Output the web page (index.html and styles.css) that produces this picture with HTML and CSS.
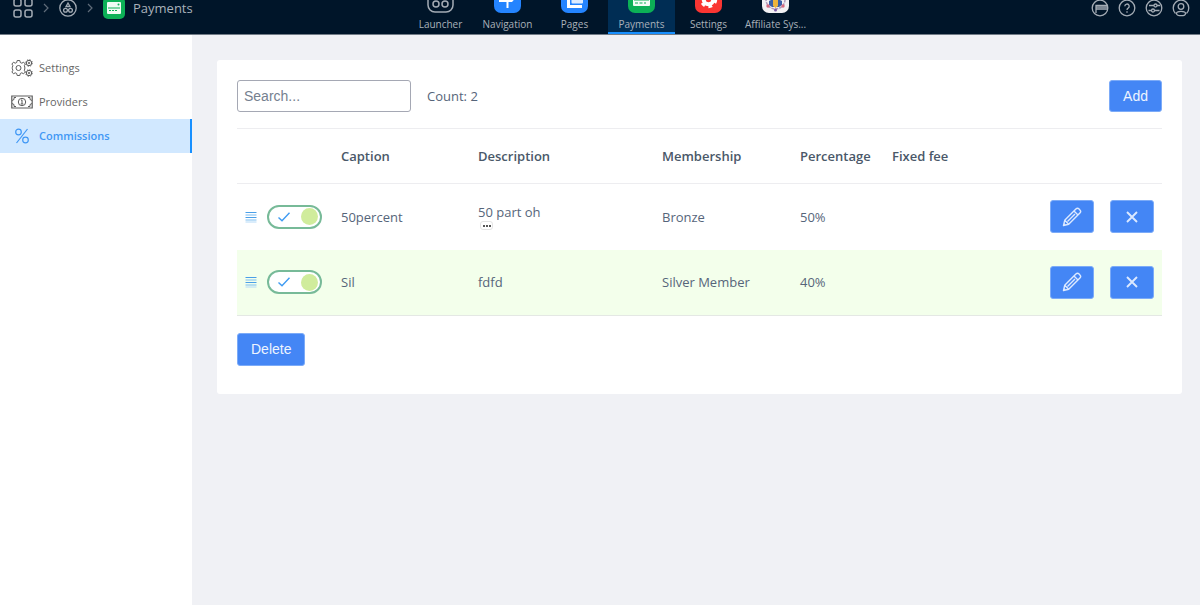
FILE: index.html
```html
<!DOCTYPE html>
<html lang="en">
<head>
<meta charset="utf-8">
<title>Payments - Commissions</title>
<link rel="stylesheet" href="styles.css">
</head>
<body>
<svg class="defs" aria-hidden="true">
  <symbol id="check" viewBox="0 0 14 12"><path d="M1.5 6.5 5 9.8 12.500 1.800" fill="none" stroke="#3f9bf2" stroke-width="1.4"/></symbol>
  <symbol id="lines" viewBox="0 0 12 12"><path d="M.5 1.500h11M.5 6.500h11" stroke="#4a9fe8"/><path d="M.5 4h11M.5 9h11" stroke="#7dbdf0"/><path d="M.5 11h11" stroke="#b5daf7"/></symbol>
  <symbol id="pencil" viewBox="0 0 20 20"><path d="m1.500 18.500 1.200-5.200L13.900 2.100a2.300 2.300 0 0 1 3.200 0l.8.800a2.300 2.300 0 0 1 0 3.200L6.700 17.300zM2.700 13.300l4 4M12 4l4 4M5.500 14.500l7.500-7.500M1.800 16.500l1.700 1.700" fill="none" stroke="#dce9ff" stroke-width="1.400" stroke-linejoin="round"/></symbol>
  <symbol id="cross" viewBox="0 0 12 12"><path d="m1 1 10 10M11 1 1 11" stroke="#dce9ff" stroke-width="1.900"/></symbol>
  <symbol id="chevron" viewBox="0 0 6 10"><path d="m1 1 4 4-4 4" fill="none" stroke="#5f6c7a" stroke-width="1.200"/></symbol>
</svg>

<header class="topbar">
  <nav class="crumbs" aria-label="Breadcrumb">
    <a href="#" aria-label="Home"><svg class="home-icon" viewBox="0 0 20 20" fill="none" stroke="#a4acb5" stroke-width="1.500"><rect x="1" y="1" width="7" height="7" rx="2"/><rect x="12" y="1" width="7" height="7" rx="2"/><rect x="1" y="12" width="7" height="7" rx="2"/><rect x="12" y="12" width="7" height="7" rx="2"/></svg></a>
    <svg class="chevron"><use href="#chevron"/></svg>
    <a href="#" aria-label="Modules"><svg class="ring-icon" viewBox="0 0 18 18" fill="none" stroke="#a4acb5" stroke-width="1.300"><circle cx="9" cy="9" r="8.200"/><path d="M9 4 7 7.500h4z"/><circle cx="6.500" cy="11.300" r="1.900"/><circle cx="11.500" cy="11.300" r="1.900"/></svg></a>
    <svg class="chevron"><use href="#chevron"/></svg>
    <a href="#" class="crumb-current"><svg class="crumb-app" viewBox="0 0 22 22"><rect width="22" height="22" rx="5" fill="#0cb056"/><rect x="4" y="5" width="14" height="12" rx="1" fill="#effbf3"/><path d="M5 11h12M6 13.500h2M9 13.500h2M12 13.500h2" stroke="#0cb056" stroke-width="1.200"/><circle cx="15.500" cy="7.500" r="1" fill="#0cb056"/></svg><span>Payments</span></a>
  </nav>
  <nav class="apps" aria-label="Apps">
    <a href="#" class="app"><svg viewBox="0 0 27 27" fill="none" stroke="#a4acb5" stroke-width="1.500"><rect x="1" y="1" width="25" height="25" rx="7"/><circle cx="9" cy="9" r="3"/><circle cx="18" cy="9" r="3"/><circle cx="9" cy="18" r="3"/><circle cx="18" cy="18" r="3"/></svg><span>Launcher</span></a>
    <a href="#" class="app"><svg viewBox="0 0 27 27"><rect width="27" height="27" rx="7" fill="#2484ff"/><path d="M7 7h11l4 4.500-4 4.500H5V7z" fill="#fff"/><path d="M13.500 15v7" stroke="#fff" stroke-width="2"/></svg><span>Navigation</span></a>
    <a href="#" class="app"><svg viewBox="0 0 27 27"><rect width="27" height="27" rx="7" fill="#2484ff"/><path d="M6 8h3v11h12v3H6z" fill="#fff"/><rect x="10.500" y="5" width="11.500" height="12.500" rx="1" fill="#dcebff"/></svg><span>Pages</span></a>
    <a href="#" class="app app-active" aria-current="page"><svg viewBox="0 0 27 27"><rect width="27" height="27" rx="7" fill="#0cb056"/><rect x="5" y="7" width="17" height="13" rx="1" fill="#f2fcf5"/><path d="M6 14h15M7 17h3M11.500 17h3M16 17h2" stroke="#0cb056"/></svg><span>Payments</span></a>
    <a href="#" class="app"><svg viewBox="0 0 27 27"><rect width="27" height="27" rx="7" fill="#fa3532"/><circle cx="13.500" cy="13.500" r="4.800" fill="none" stroke="#fff" stroke-width="4"/><circle cx="13.500" cy="13.500" r="7.200" fill="none" stroke="#fff" stroke-width="3" stroke-dasharray="3.770"/></svg><span>Settings</span></a>
    <a href="#" class="app"><svg viewBox="0 0 27 27"><rect width="27" height="27" rx="7" fill="#f2f1f4"/><circle cx="13.500" cy="13.500" r="9.500" fill="none" stroke="#b09abb" stroke-width="1.500" stroke-dasharray="3 1"/><path d="M7 19v-4l4-2h5l4 2v4l-3 2h-7z" fill="#385fa8"/><path d="M11 13h5v7l-2.500 2-2.500-2z" fill="#edb43c"/><circle cx="6" cy="20" r="1.700" fill="#d56980"/><circle cx="21" cy="20" r="1.700" fill="#d56980"/><circle cx="13.500" cy="24" r="1.500" fill="#7d5aa5"/></svg><span>Affiliate Sys...</span></a>
  </nav>
  <div class="tools">
    <button type="button" aria-label="Site"><svg viewBox="0 0 18 18"><circle cx="9" cy="9" r="7.800"/><path d="M5 14V6.500h12M5 10h12M5 8.200h12" /></svg></button>
    <button type="button" aria-label="Help"><svg viewBox="0 0 18 18"><circle cx="9" cy="9" r="7.800"/><path d="M6.800 7.200a2.200 2.200 0 1 1 3.300 1.900Q9 9.700 9 11M9 12.200v1.500"/></svg></button>
    <button type="button" aria-label="Preferences"><svg viewBox="0 0 18 18"><circle cx="9" cy="9" r="7.800"/><path d="M4 6.500h5M12 6.500h3M3.500 11.500h3M9.500 11.500h5"/><circle cx="10.500" cy="6.500" r="1.500"/><circle cx="8" cy="11.500" r="1.500"/></svg></button>
    <button type="button" aria-label="Account"><svg viewBox="0 0 18 18"><path d="M3.500 14.500a7.800 7.800 0 1 1 11 0"/><circle cx="9" cy="7.500" r="2.800"/><ellipse cx="9" cy="14.500" rx="4.500" ry="2.200"/></svg></button>
  </div>
</header>

<div class="layout">
  <nav class="sidebar" aria-label="Payments">
    <a href="#" class="side-link"><svg viewBox="0 0 22 18" fill="none" stroke="#5c5c5c"><circle cx="7.500" cy="9" r="2.500"/><path d="M6.200 1.500h2.600l.5 2 1.500.7 1.800-1 1.700 1.800-1 1.700.5 1.300v2l-.5 1.300 1 1.700-1.700 1.800-1.800-1-1.500.7-.5 2H6.200l-.5-2-1.500-.7-1.700 1L.9 13l1-1.700-.6-1.500v-1.600l.6-1.500-1-1.700 1.600-1.800 1.700 1 1.500-.7z"/><circle cx="18" cy="4" r="2.700"/><circle cx="18" cy="4" r=".8"/><circle cx="18" cy="14" r="2.700"/><circle cx="18" cy="14" r=".8"/><circle cx="18" cy="4" r="3.400" stroke-width=".8" stroke-dasharray="1.335"/><circle cx="18" cy="14" r="3.400" stroke-width=".8" stroke-dasharray="1.335"/></svg><span>Settings</span></a>
    <a href="#" class="side-link"><svg viewBox="0 0 22 18" fill="none" stroke="#5c5c5c"><path d="M.8 3h20.400v12H.8z" stroke-width="1.200"/><path d="M5 4.500H3v2L1 7.500M17 4.500h2v2l2 1M5 13.500H3v-2l-2-1M17 13.500h2v-2l2-1"/><circle cx="11" cy="9" r="3.700"/><path d="M10 7.500l1-.7V11M9.700 11h2.600"/></svg><span>Providers</span></a>
    <a href="#" class="side-link side-active" aria-current="page"><svg viewBox="0 0 22 18" fill="none" stroke="#3f97f5" stroke-width="1.200"><circle cx="7.500" cy="5" r="2.800"/><circle cx="14.500" cy="13" r="2.800"/><path d="M16.500 2 5.500 16"/></svg><span>Commissions</span></a>
  </nav>

  <main class="content">
    <section class="card">
      <div class="toolbar">
        <input class="search" type="text" placeholder="Search..." aria-label="Search">
        <span class="count">Count: 2</span>
        <button type="button" class="btn btn-add">Add</button>
      </div>
      <table class="grid">
        <colgroup><col class="c-handle"><col class="c-toggle"><col class="c-caption"><col class="c-desc"><col class="c-member"><col class="c-percent"><col><col class="c-action"><col class="c-action"></colgroup>
        <thead>
          <tr><th></th><th></th><th>Caption</th><th>Description</th><th>Membership</th><th>Percentage</th><th>Fixed fee</th><th></th><th></th></tr>
        </thead>
        <tbody>
          <tr>
            <td><svg class="handle"><use href="#lines"/></svg></td>
            <td><label class="switch"><input type="checkbox" checked aria-label="Enable 50percent"><svg><use href="#check"/></svg></label></td>
            <td>50percent</td>
            <td><div class="desc"><span>50 part oh</span><button type="button" class="more" aria-label="Show more"><i></i><i></i><i></i></button></div></td>
            <td>Bronze</td><td>50%</td><td></td>
            <td><button type="button" class="btn btn-icon" aria-label="Edit"><svg class="pencil"><use href="#pencil"/></svg></button></td>
            <td><button type="button" class="btn btn-icon" aria-label="Remove"><svg class="cross"><use href="#cross"/></svg></button></td>
          </tr>
          <tr class="row-alt">
            <td><svg class="handle"><use href="#lines"/></svg></td>
            <td><label class="switch"><input type="checkbox" checked aria-label="Enable Sil"><svg><use href="#check"/></svg></label></td>
            <td>Sil</td><td>fdfd</td><td>Silver Member</td><td>40%</td><td></td>
            <td><button type="button" class="btn btn-icon" aria-label="Edit"><svg class="pencil"><use href="#pencil"/></svg></button></td>
            <td><button type="button" class="btn btn-icon" aria-label="Remove"><svg class="cross"><use href="#cross"/></svg></button></td>
          </tr>
        </tbody>
      </table>
      <button type="button" class="btn">Delete</button>
    </section>
  </main>
</div>
</body>
</html>
```
FILE: styles.css
```css
* { box-sizing: border-box; }

body {
  margin: 0;
  min-height: 100vh;
  display: flex;
  flex-direction: column;
  background: #f0f1f5;
  color: #56657a;
  font-family: "Segoe UI", "Open Sans", "Noto Sans", sans-serif;
  font-size: 13px;
  line-height: 18px;
}

a { color: inherit; text-decoration: none; }
button { font: inherit; cursor: pointer; }
svg { display: block; flex: none; }
.defs { position: absolute; width: 0; height: 0; }

/* Top bar: taller items are anchored to its bottom edge and clipped above */
.topbar {
  display: grid;
  grid-template-columns: 1fr auto 1fr;
  grid-template-rows: 34px;
  align-items: end;
  height: 35px;
  overflow: hidden;
  background: #001529;
  border-bottom: 1px solid #727c87;
  color: #a9b1ba;
}

.crumbs {
  display: flex;
  align-items: center;
  gap: 10px;
  padding: 0 0 15px 13px;
}
.home-icon { width: 20px; height: 20px; }
.ring-icon { width: 18px; height: 18px; }
.chevron { width: 6px; height: 10px; }
.crumb-current { display: flex; align-items: center; gap: 8px; }
.crumb-app { width: 22px; height: 22px; }

.apps { display: flex; margin-left: 16px; }
.app {
  display: flex;
  flex-direction: column;
  align-items: center;
  gap: 4px;
  width: 67px;
  padding-bottom: 1px;
  border-bottom: 2px solid transparent;
  font-size: 10px;
  line-height: 14px;
  white-space: nowrap;
}
.app svg { width: 27px; height: 27px; }
.app-active { background: #002d54; border-color: #1890ff; }

.tools {
  display: flex;
  justify-content: flex-end;
  gap: 9px;
  padding: 0 10px 17px 0;
}
.tools button { padding: 0; border: 0; background: none; }
.tools svg {
  width: 18px;
  height: 18px;
  fill: none;
  stroke: #a4acb5;
  stroke-width: 1.3;
}

.layout { display: flex; flex: 1; }

.sidebar {
  flex: none;
  width: 192px;
  padding-top: 16px;
  background: #fff;
}
.side-link {
  display: flex;
  align-items: center;
  gap: 6px;
  height: 34px;
  padding-left: 11px;
  color: #666;
  font-size: 11px;
}
.side-link svg { width: 22px; height: 18px; }
.side-active {
  background: #d1e8ff;
  border-right: 2px solid #1890ff;
  color: #3f97f5;
  font-weight: 600;
}

.content { flex: 1; padding: 25px 18px 25px 25px; }
.card {
  padding: 20px 20px 28px;
  border-radius: 3px;
  background: #fff;
}

.toolbar {
  display: flex;
  align-items: center;
  gap: 16px;
  padding-bottom: 16px;
}
.search {
  width: 174px;
  height: 32px;
  padding: 0 6px;
  border: 1px solid #a5a8b4;
  border-radius: 3px;
  background: #fff;
  color: #56657a;
  font-family: "Liberation Sans", Arial, sans-serif;
  font-size: 14px;
}
.search::placeholder { color: #75808f; opacity: 1; }
.btn-add { height: 32px; margin-left: auto; }

.btn {
  padding: 7px 13px;
  border: 1px solid #7cabf8;
  border-radius: 3px;
  background: #4486f5;
  color: #edf4ff;
  font-family: "Liberation Sans", Arial, sans-serif;
  font-size: 14px;
  line-height: 17px;
}
.btn-add { padding-block: 6px; }
.btn-icon {
  display: grid;
  place-items: center;
  width: 44px;
  height: 33px;
  padding: 0;
}
.pencil { width: 20px; height: 20px; }
.cross { width: 12px; height: 12px; }

.grid {
  width: 100%;
  margin-bottom: 17px;
  border-collapse: collapse;
  table-layout: fixed;
}
.c-handle { width: 22px; }
.c-toggle { width: 74px; }
.c-caption { width: 137px; }
.c-desc { width: 184px; }
.c-member { width: 138px; }
.c-percent { width: 92px; }
.c-action { width: 60px; }

.grid th, .grid td { padding: 0 8px; text-align: left; }
.grid th {
  height: 55px;
  border-top: 1px solid #ededf0;
  border-bottom: 1px solid #ededf0;
  color: #4a5869;
  font-weight: 600;
  font-size: 13px;
  white-space: nowrap;
}
.grid td { height: 66px; }
.grid tbody tr:last-child td { border-bottom: 1px solid #e4e8e4; }
.row-alt { background: #f3ffeb; }
.handle { width: 12px; height: 12px; }

.switch { position: relative; display: block; width: 55px; height: 24px; }
.switch input {
  display: flex;
  align-items: center;
  justify-content: flex-end;
  appearance: none;
  width: 100%;
  height: 100%;
  margin: 0;
  padding-right: 2px;
  border: 2px solid #77ba98;
  border-radius: 12px;
  background: #fff;
}
.switch input::before {
  content: "";
  width: 17px;
  height: 17px;
  border-radius: 50%;
  background: #d0ec9c;
}
.switch svg { position: absolute; top: 6px; left: 10px; width: 14px; height: 12px; }

.desc { display: flex; flex-direction: column; align-items: flex-start; }
.more {
  display: flex;
  align-items: center;
  justify-content: center;
  gap: 1px;
  width: 13px;
  height: 9px;
  margin-left: 2px;
  padding: 0;
  border: 1px solid #e3e3e3;
  border-radius: 3px;
  background: #fff;
}
.more i { width: 2px; height: 2px; background: #555; }
```
